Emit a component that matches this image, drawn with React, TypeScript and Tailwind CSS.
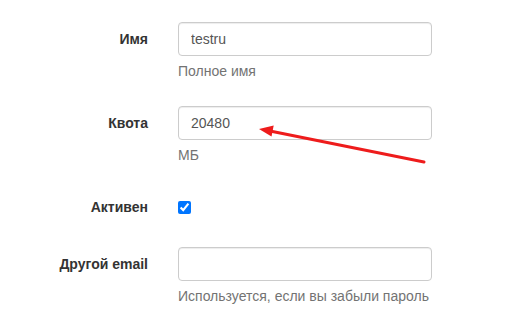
import React from "react";

const font = "font-['Liberation_Sans',Arial,sans-serif]";

function Label({ children }: { children: React.ReactNode }) {
  return (
    <label className="w-[148px] shrink-0 pt-[7px] text-right text-[14px] font-bold leading-[20px] text-[#333]">
      {children}
    </label>
  );
}

function TextInput({ value }: { value: string }) {
  return (
    <input
      type="text"
      defaultValue={value}
      className="
        block
        h-[34px]
        w-[254px]
        rounded-[4px]
        border
        border-[#ccc]
        bg-white
        px-3
        text-[14px]
        text-[#555]
        shadow-[inset_0_1px_1px_rgba(0,0,0,0.075)]
        outline-none
      "
    />
  );
}

function Help({ children }: { children: React.ReactNode }) {
  return (
    <p className="mt-[5px] text-[14px] leading-[20px] text-[#737373]">
      {children}
    </p>
  );
}

export default function App() {
  return (
    <div className={`relative h-[325px] w-[509px] bg-white pt-[22px] ${font}`}>
      {/* Имя */}
      <div className="flex gap-[30px]">
        <Label>Имя</Label>
        <div>
          <TextInput value="testru" />
          <Help>Полное имя</Help>
        </div>
      </div>

      {/* Квота */}
      <div className="mt-[25px] flex gap-[30px]">
        <Label>Квота</Label>
        <div>
          <TextInput value="20480" />
          <Help>МБ</Help>
        </div>
      </div>

      {/* Активен */}
      <div className="mt-[25px] flex h-[42px] gap-[30px]">
        <Label>Активен</Label>
        <div className="pt-[11px]">
          <input
            type="checkbox"
            defaultChecked
            className="m-0 block h-[13px] w-[13px] accent-[#0075ff]"
          />
        </div>
      </div>

      {/* Другой email */}
      <div className="mt-[15px] flex gap-[30px]">
        <Label>Другой email</Label>
        <div>
          <TextInput value="" />
          <Help>Используется, если вы забыли пароль</Help>
        </div>
      </div>

      {/* стрелка */}
      <svg
        className="pointer-events-none absolute left-0 top-0"
        width="509"
        height="325"
      >
        <line
          x1="424"
          y1="162"
          x2="270"
          y2="131"
          stroke="#ee1c1c"
          strokeWidth="3"
          strokeLinecap="round"
        />
        <polygon points="259,129 271.5,136.5 273.7,125.5" fill="#ee1c1c" />
      </svg>
    </div>
  );
}
